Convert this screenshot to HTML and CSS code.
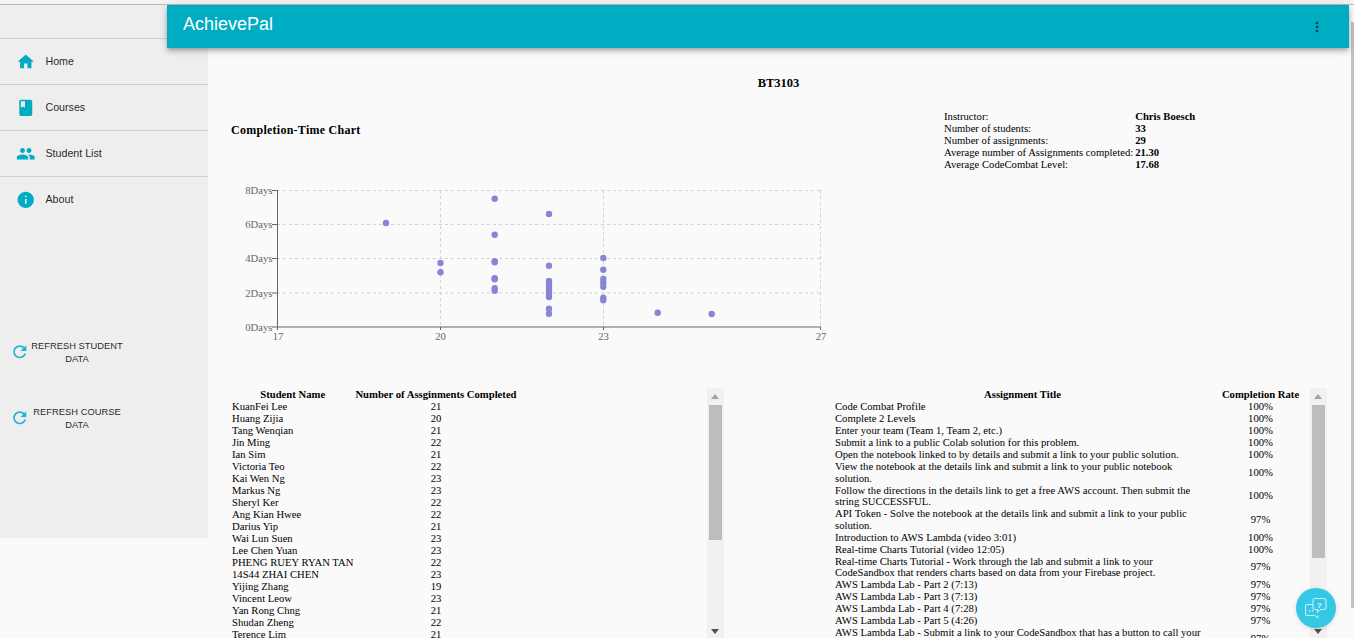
FILE: index.html
```html
<!DOCTYPE html>
<html lang="en">
<head>
  <meta charset="UTF-8" />
  <title>AchievePal</title>
  <link rel="stylesheet" href="styles.css">
</head>
<body>

<div class="top-line"></div>

<div class="layout">
  <header class="appbar">
    <span class="brand">AchievePal</span>
    <svg class="more" viewBox="0 0 24 24"><path d="M12 8c1.1 0 2-.9 2-2s-.9-2-2-2-2 .9-2 2 .9 2 2 2zm0 2c-1.1 0-2 .9-2 2s.9 2 2 2 2-.9 2-2-.9-2-2-2zm0 6c-1.1 0-2 .9-2 2s.9 2 2 2 2-.9 2-2-.9-2-2-2z"/></svg>
  </header>

  <nav class="sidebar">
    <div class="nav-head"></div>
    <a class="nav-item">
      <svg class="nav-icon" viewBox="0 0 24 24"><path d="M10 20v-6h4v6h5v-8h3L12 3 2 12h3v8z"/></svg>
      <span>Home</span>
    </a>
    <a class="nav-item">
      <svg class="nav-icon" viewBox="0 0 24 24"><path d="M18 2H6c-1.1 0-2 .9-2 2v16c0 1.1.9 2 2 2h12c1.1 0 2-.9 2-2V4c0-1.1-.9-2-2-2zM6 4h5v8l-2.5-1.5L6 12V4z"/></svg>
      <span>Courses</span>
    </a>
    <a class="nav-item">
      <svg class="nav-icon" viewBox="0 0 24 24"><path d="M16 11c1.66 0 2.99-1.34 2.99-3S17.66 5 16 5c-1.66 0-3 1.34-3 3s1.34 3 3 3zm-8 0c1.66 0 2.99-1.34 2.99-3S9.66 5 8 5C6.34 5 5 6.34 5 8s1.34 3 3 3zm0 2c-2.33 0-7 1.17-7 3.5V19h14v-2.5c0-2.33-4.67-3.5-7-3.5zm8 0c-.29 0-.62.02-.97.05 1.16.84 1.97 1.97 1.97 3.45V19h6v-2.5c0-2.33-4.67-3.5-7-3.5z"/></svg>
      <span>Student List</span>
    </a>
    <a class="nav-item last">
      <svg class="nav-icon" viewBox="0 0 24 24"><path d="M12 2C6.48 2 2 6.48 2 12s4.48 10 10 10 10-4.48 10-10S17.52 2 12 2zm1 15h-2v-6h2v6zm0-8h-2V7h2v2z"/></svg>
      <span>About</span>
    </a>

    <div class="refresh-list">
      <button class="refresh">
        <svg class="refresh-icon" viewBox="0 0 24 24"><path d="M17.65 6.35C16.2 4.9 14.21 4 12 4c-4.42 0-7.99 3.58-7.99 8s3.57 8 7.99 8c3.73 0 6.84-2.55 7.73-6h-2.08c-.82 2.33-3.04 4-5.65 4-3.31 0-6-2.69-6-6s2.69-6 6-6c1.66 0 3.14.69 4.22 1.78L13 11h7V4l-2.35 2.35z"/></svg>
        <span>Refresh student data</span>
      </button>
      <button class="refresh">
        <svg class="refresh-icon" viewBox="0 0 24 24"><path d="M17.65 6.35C16.2 4.9 14.21 4 12 4c-4.42 0-7.99 3.58-7.99 8s3.57 8 7.99 8c3.73 0 6.84-2.55 7.73-6h-2.08c-.82 2.33-3.04 4-5.65 4-3.31 0-6-2.69-6-6s2.69-6 6-6c1.66 0 3.14.69 4.22 1.78L13 11h7V4l-2.35 2.35z"/></svg>
        <span>Refresh course data</span>
      </button>
    </div>
  </nav>

  <main class="main">
    <h1 class="course-title">BT3103</h1>

    <section class="overview">
      <div class="chart-col">
        <h2 class="chart-title">Completion-Time Chart</h2>
        <svg class="chart" viewBox="231 180 600 170">
          <g class="grid">
            <line x1="277" y1="190.5" x2="821" y2="190.5"/>
            <line x1="277" y1="224.5" x2="821" y2="224.5"/>
            <line x1="277" y1="258.5" x2="821" y2="258.5"/>
            <line x1="277" y1="293" x2="821" y2="293"/>
            <line x1="440.5" y1="190" x2="440.5" y2="327"/>
            <line x1="603.5" y1="190" x2="603.5" y2="327"/>
            <line x1="820.5" y1="190" x2="820.5" y2="327"/>
          </g>
          <g class="axis">
            <line x1="277.5" y1="190" x2="277.5" y2="327"/>
            <line x1="277" y1="327" x2="821" y2="327"/>
            <line x1="272" y1="190.5" x2="277" y2="190.5"/>
            <line x1="272" y1="224.5" x2="277" y2="224.5"/>
            <line x1="272" y1="258.5" x2="277" y2="258.5"/>
            <line x1="272" y1="293" x2="277" y2="293"/>
            <line x1="272" y1="327" x2="277" y2="327"/>
            <line x1="277.5" y1="327" x2="277.5" y2="330"/>
            <line x1="440.5" y1="327" x2="440.5" y2="330"/>
            <line x1="603.5" y1="327" x2="603.5" y2="330"/>
            <line x1="820.5" y1="327" x2="820.5" y2="330"/>
          </g>
          <g class="y-labels">
            <text x="272.5" y="193.500">8Days</text>
            <text x="272.5" y="228">6Days</text>
            <text x="272.5" y="262">4Days</text>
            <text x="272.5" y="297">2Days</text>
            <text x="272.5" y="331">0Days</text>
          </g>
          <g class="x-labels">
            <text x="278" y="340">17</text>
            <text x="440.5" y="340">20</text>
            <text x="603.5" y="340">23</text>
            <text x="821" y="340">27</text>
          </g>
          <g class="points">
            <circle cx="386" cy="223" r="3.2"/>
            <circle cx="440.5" cy="263" r="3.2"/>
            <circle cx="440.5" cy="272.3" r="3.2"/>
            <circle cx="494.7" cy="198.7" r="3.2"/>
            <circle cx="494.7" cy="234.7" r="3.2"/>
            <circle cx="494.7" cy="261.3" r="3.2"/>
            <circle cx="494.7" cy="262.3" r="3.2"/>
            <circle cx="494.7" cy="278.2" r="3.2"/>
            <circle cx="494.7" cy="279.2" r="3.2"/>
            <circle cx="494.7" cy="288.3" r="3.2"/>
            <circle cx="494.7" cy="290.7" r="3.2"/>
            <circle cx="549" cy="214" r="3.2"/>
            <circle cx="549" cy="265.7" r="3.2"/>
            <circle cx="549" cy="281" r="3.2"/>
            <circle cx="549" cy="284" r="3.2"/>
            <circle cx="549" cy="287" r="3.2"/>
            <circle cx="549" cy="290" r="3.2"/>
            <circle cx="549" cy="293" r="3.2"/>
            <circle cx="549" cy="297" r="3.2"/>
            <circle cx="549" cy="308.7" r="3.2"/>
            <circle cx="549" cy="313.7" r="3.2"/>
            <circle cx="603.3" cy="258" r="3.2"/>
            <circle cx="603.3" cy="269.7" r="3.2"/>
            <circle cx="603.3" cy="279" r="3.2"/>
            <circle cx="603.3" cy="282.7" r="3.2"/>
            <circle cx="603.3" cy="286.7" r="3.2"/>
            <circle cx="603.3" cy="297.7" r="3.2"/>
            <circle cx="603.3" cy="300.3" r="3.2"/>
            <circle cx="657.7" cy="312.7" r="3.2"/>
            <circle cx="711.7" cy="314" r="3.2"/>
          </g>
        </svg>
      </div>

      <table class="info">
        <tr><td>Instructor:</td><th>Chris Boesch</th></tr>
        <tr><td>Number of students:</td><th>33</th></tr>
        <tr><td>Number of assignments:</td><th>29</th></tr>
        <tr><td>Average number of Assignments completed:</td><th>21.30</th></tr>
        <tr><td>Average CodeCombat Level:</td><th>17.68</th></tr>
      </table>
    </section>

    <section class="lists">
      <div class="list-box">
        <div class="list-body">
          <table class="list">
            <tr><th>Student Name</th><th>Number of Assginments Completed</th></tr>
            <tr><td>KuanFei Lee</td><td class="num">21</td></tr>
            <tr><td>Huang Zijia</td><td class="num">20</td></tr>
            <tr><td>Tang Wenqian</td><td class="num">21</td></tr>
            <tr><td>Jin Ming</td><td class="num">22</td></tr>
            <tr><td>Ian Sim</td><td class="num">21</td></tr>
            <tr><td>Victoria Teo</td><td class="num">22</td></tr>
            <tr><td>Kai Wen Ng</td><td class="num">23</td></tr>
            <tr><td>Markus Ng</td><td class="num">23</td></tr>
            <tr><td>Sheryl Ker</td><td class="num">22</td></tr>
            <tr><td>Ang Kian Hwee</td><td class="num">22</td></tr>
            <tr><td>Darius Yip</td><td class="num">21</td></tr>
            <tr><td>Wai Lun Suen</td><td class="num">23</td></tr>
            <tr><td>Lee Chen Yuan</td><td class="num">23</td></tr>
            <tr><td>PHENG RUEY RYAN TAN</td><td class="num">22</td></tr>
            <tr><td>14S44 ZHAI CHEN</td><td class="num">23</td></tr>
            <tr><td>Yijing Zhang</td><td class="num">19</td></tr>
            <tr><td>Vincent Leow</td><td class="num">23</td></tr>
            <tr><td>Yan Rong Chng</td><td class="num">21</td></tr>
            <tr><td>Shudan Zheng</td><td class="num">22</td></tr>
            <tr><td>Terence Lim</td><td class="num">21</td></tr>
          </table>
        </div>
        <div class="scrollbar">
          <div class="arrow-up"></div>
          <div class="thumb thumb-students"></div>
          <div class="arrow-down"></div>
        </div>
      </div>

      <div class="list-box">
        <div class="list-body">
          <table class="list list-wide">
            <tr><th class="title-col">Assignment Title</th><th>Completion Rate</th></tr>
            <tr><td>Code Combat Profile</td><td class="num">100%</td></tr>
            <tr><td>Complete 2 Levels</td><td class="num">100%</td></tr>
            <tr><td>Enter your team (Team 1, Team 2, etc.)</td><td class="num">100%</td></tr>
            <tr><td>Submit a link to a public Colab solution for this problem.</td><td class="num">100%</td></tr>
            <tr><td>Open the notebook linked to by details and submit a link to your public solution.</td><td class="num">100%</td></tr>
            <tr><td>View the notebook at the details link and submit a link to your public notebook solution.</td><td class="num">100%</td></tr>
            <tr><td>Follow the directions in the details link to get a free AWS account. Then submit the string SUCCESSFUL.</td><td class="num">100%</td></tr>
            <tr><td>API Token - Solve the notebook at the details link and submit a link to your public solution.</td><td class="num">97%</td></tr>
            <tr><td>Introduction to AWS Lambda (video 3:01)</td><td class="num">100%</td></tr>
            <tr><td>Real-time Charts Tutorial (video 12:05)</td><td class="num">100%</td></tr>
            <tr><td>Real-time Charts Tutorial - Work through the lab and submit a link to your CodeSandbox that renders charts based on data from your Firebase project.</td><td class="num">97%</td></tr>
            <tr><td>AWS Lambda Lab - Part 2 (7:13)</td><td class="num">97%</td></tr>
            <tr><td>AWS Lambda Lab - Part 3 (7:13)</td><td class="num">97%</td></tr>
            <tr><td>AWS Lambda Lab - Part 4 (7:28)</td><td class="num">97%</td></tr>
            <tr><td>AWS Lambda Lab - Part 5 (4:26)</td><td class="num">97%</td></tr>
            <tr><td>AWS Lambda Lab - Submit a link to your CodeSandbox that has a button to call your own AWS Lambda function.</td><td class="num">97%</td></tr>
          </table>
        </div>
        <div class="scrollbar">
          <div class="arrow-up"></div>
          <div class="thumb thumb-assignments"></div>
          <div class="arrow-down"></div>
        </div>
      </div>
    </section>
  </main>

  <div class="page-scroll"><div class="page-thumb"></div></div>
</div>

<button class="chat">
  <svg viewBox="0 0 40 40">
    <path class="chat-line" d="M17 16.5h-6a1.5 1.5 0 0 0-1.500 1.500v8a1.500 1.500 0 0 0 1.500 1.500h7.500l3.500 2.500v-2.500"/>
    <path class="chat-line" d="M18.500 10.500h10a1.500 1.500 0 0 1 1.500 1.500v8a1.500 1.500 0 0 1-1.500 1.500h-4.500l-2.500 3v-3h-3a1.500 1.500 0 0 1-1.500-1.500v-8a1.500 1.500 0 0 1 1.500-1.500z"/>
    <text class="chat-mark" x="23.500" y="19.500">?</text>
    <circle class="chat-dot" cx="13.500" cy="23" r="0.800"/>
    <circle class="chat-dot" cx="16.500" cy="23" r="0.800"/>
  </svg>
</button>

</body>
</html>
```

FILE: styles.css
```css
html, body {
  margin: 0;
  height: 100%;
  overflow: hidden;
}

body {
  background: #fafafa;
  font-family: "Liberation Serif", serif;
  font-size: 10.67px;
  color: #000;
}

.top-line {
  height: 4px;
  background: #f3f3f3;
  border-bottom: 1px solid #b9b9b9;
}

.layout {
  position: relative;
  display: flex;
  height: 633px;
}

/* app bar sits over the drawer */
.appbar {
  position: absolute;
  top: 0;
  left: 167px;
  right: 5px;
  height: 43px;
  display: flex;
  align-items: center;
  justify-content: space-between;
  padding: 0 24px 0 16px;
  background: #00acc1;
  box-shadow: 0 2px 4px -1px rgba(0,0,0,0.2), 0 4px 5px 0 rgba(0,0,0,0.14), 0 1px 10px 0 rgba(0,0,0,0.12);
  z-index: 2;
}

.brand {
  margin-bottom: 4px;
  font-family: "Liberation Sans", sans-serif;
  font-size: 18px;
  color: #fff;
}

.more {
  width: 16px;
  height: 16px;
  fill: rgba(0,0,0,0.6);
}

.sidebar {
  flex: none;
  width: 208px;
  height: 533px;
  background: #eeeeee;
  font-family: "Liberation Sans", sans-serif;
  font-size: 10.67px;
  color: rgba(0,0,0,0.87);
}

.nav-head {
  height: 33px;
  border-bottom: 1px solid #d0d0d0;
}

.nav-item {
  display: flex;
  align-items: center;
  gap: 10px;
  height: 45px;
  padding-left: 16px;
  border-bottom: 1px solid #d0d0d0;
}

.nav-item span {
  margin-bottom: 2px;
}

.nav-item.last {
  border-bottom: none;
}

.nav-icon {
  width: 19.500px;
  height: 19.500px;
  fill: #00acc1;
}

.refresh-list {
  display: flex;
  flex-direction: column;
  gap: 40px;
  margin-top: 117px;
}

.refresh {
  display: flex;
  align-items: center;
  width: 154px;
  height: 26px;
  padding: 0 0 0 10px;
  border: none;
  background: none;
  font-family: "Liberation Sans", sans-serif;
  font-size: 9.400px;
  line-height: 13px;
  color: rgba(0,0,0,0.87);
  text-transform: uppercase;
}

.refresh span {
  flex: none;
  width: 95px;
  text-align: center;
}

.refresh-icon {
  flex: none;
  width: 19.500px;
  height: 19.500px;
  fill: #1cb4cf;
}

.main {
  flex: 1;
  min-width: 0;
  padding-left: 23px;
}

.course-title {
  margin: 72px 0 0 -23px;
  font-size: 12.500px;
  line-height: 12px;
  text-align: center;
}

.overview {
  display: flex;
  height: 299px;
}

.chart-col {
  width: 713px;
}

.chart-title {
  margin: 34px 0 0;
  font-size: 12px;
  line-height: 14px;
  letter-spacing: 0.260px;
}

.chart {
  display: block;
  width: 600px;
  height: 170px;
  margin-top: 43px;
}

.grid line {
  stroke: #d2d2d2;
  stroke-dasharray: 3 3;
}

.axis line {
  stroke: #666;
}

.chart text {
  font-size: 10.67px;
  fill: #666;
}

.y-labels text {
  text-anchor: end;
}

.x-labels text {
  text-anchor: middle;
}

.points circle {
  fill: #8884d8;
}

.info {
  align-self: flex-start;
  margin-top: 21px;
  border-spacing: 0;
  line-height: 12px;
}

.info td, .info th {
  padding: 0 2px 0 0;
  text-align: left;
}

.lists {
  display: flex;
  gap: 110px;
}

.list-box {
  display: flex;
  width: 493px;
  height: 250px;
}

.list-body {
  flex: 1;
  min-width: 0;
  padding-top: 1px;
  overflow: hidden;
}

.list {
  border-spacing: 0;
  line-height: 11.750px;
}

.list-wide {
  width: 100%;
  table-layout: fixed;
}

.list th, .list td {
  height: 12px;
  padding: 0 1px;
}

.title-col {
  width: 375px;
}

.num {
  text-align: center;
}

/* hand drawn scrollbars for the two lists */
.scrollbar {
  flex: none;
  width: 17px;
  height: 250px;
  background: #f1f1f1;
}

.arrow-up {
  width: 0;
  height: 0;
  margin: 6px 0 0 4px;
  border-left: 4.500px solid transparent;
  border-right: 4.500px solid transparent;
  border-bottom: 5px solid #a3a3a3;
}

.arrow-down {
  width: 0;
  height: 0;
  margin: 0 0 0 4px;
  border-left: 4.500px solid transparent;
  border-right: 4.500px solid transparent;
  border-top: 5px solid #505050;
}

.thumb {
  width: 13px;
  margin: 6px 0 0 2px;
  background: #bdbdbd;
}

.thumb-students {
  height: 135px;
  margin-bottom: 89px;
}

.thumb-assignments {
  height: 153px;
  margin-bottom: 71px;
}

.page-scroll {
  flex: none;
  width: 5px;
  padding-left: 2px;
  box-sizing: border-box;
}

.page-thumb {
  height: 586px;
  margin-top: 17px;
  background: #c1c1c1;
}

.chat {
  position: fixed;
  left: 1296px;
  top: 588px;
  width: 40px;
  height: 40px;
  padding: 0;
  border: none;
  border-radius: 50%;
  background: #35c8e6;
  box-shadow: 0 1px 4px rgba(0,0,0,0.15);
}

.chat svg {
  display: block;
}

.chat-line {
  fill: none;
  stroke: #d4f3fa;
  stroke-width: 1;
}

.chat-mark {
  font-family: "Liberation Sans", sans-serif;
  font-size: 8px;
  font-weight: bold;
  fill: #e6f9fd;
  text-anchor: middle;
}

.chat-dot {
  fill: #d4f3fa;
}
```
